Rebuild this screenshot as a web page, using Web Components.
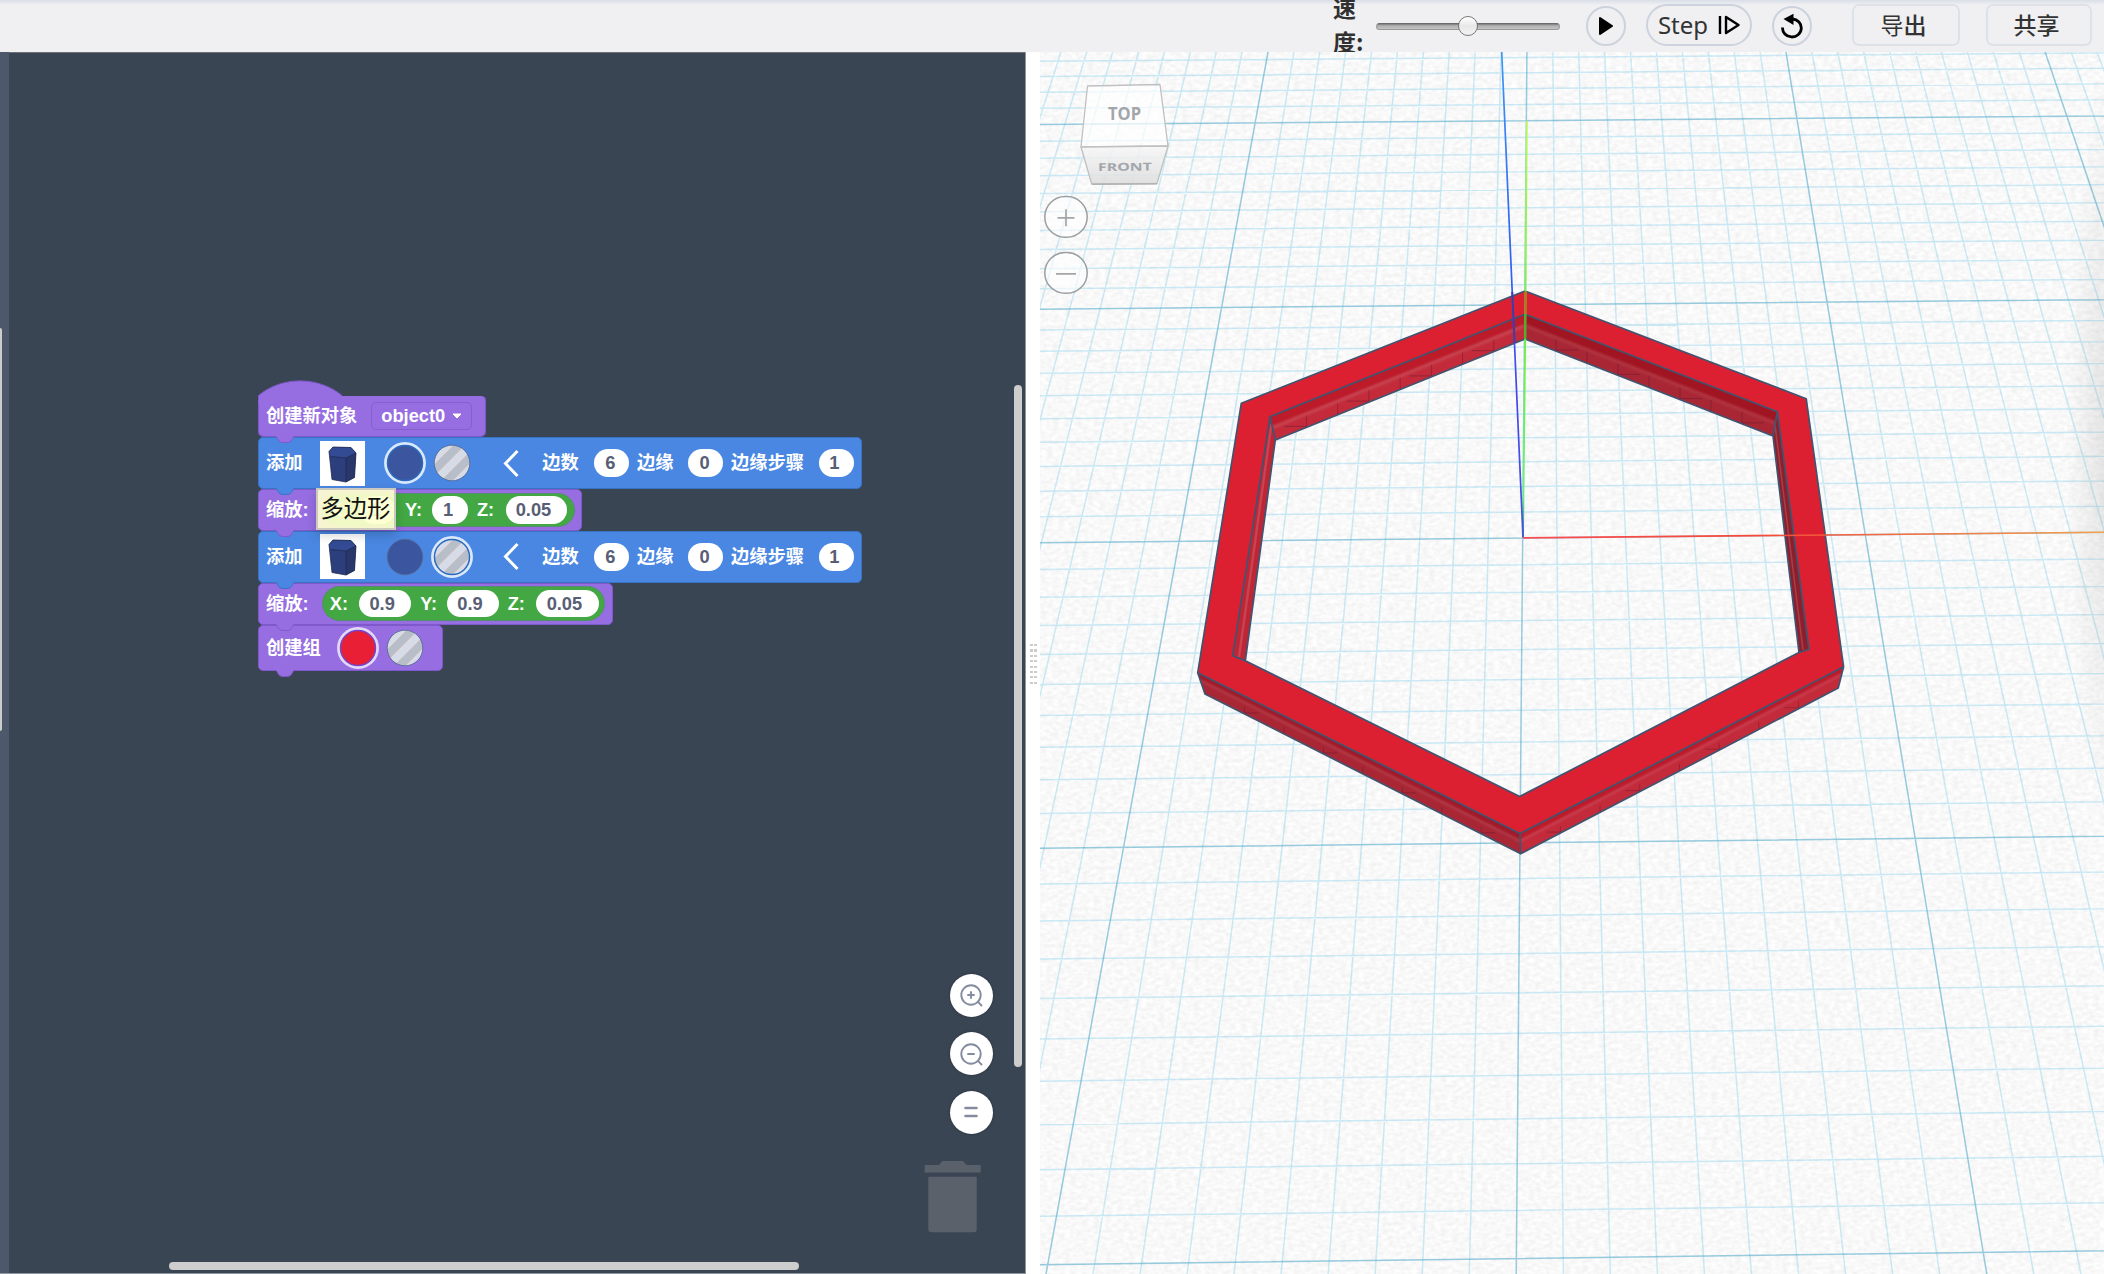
<!DOCTYPE html>
<html lang="zh-CN">
<head>
<meta charset="utf-8">
<title>Codeblocks</title>
<style>
html,body{margin:0;height:100%;overflow:hidden}
body{font-family:"Liberation Sans","Noto Sans CJK SC",sans-serif}
</style>
</head>
<body>
<code-app></code-app>
<script>
function define(name, html, after) {
  const template = document.createElement('template');
  template.innerHTML = html;
  customElements.define(name, class extends HTMLElement {
    connectedCallback() {
      if (this.shadowRoot) return;
      this.attachShadow({ mode: 'open' }).append(template.content.cloneNode(true));
      if (after) after(this, this.shadowRoot);
    }
  });
}

/* ---------- toolbar ---------- */
define('tool-button', `<style>
:host{display:flex;align-items:center;justify-content:center;box-sizing:border-box;width:40px;height:40px;border:2px solid #ccd3dc;border-radius:21px;background:#f0f0f2;color:#333;font-size:24px;flex:none}
:host([kind=step]){width:106px;height:42px;gap:10px;padding-bottom:1px}
:host([kind=text]){width:108px;height:42px;border-color:#dde2e8;border-radius:7px;font-size:23px;padding:0 5px 2px 0}
</style><slot></slot>`);

define('speed-slider', `<style>
:host{display:flex;align-items:center;justify-content:center;width:184px;height:20px;position:relative}
.track{flex:1;height:7px;box-sizing:border-box;border-radius:3.5px;background:linear-gradient(#777,#b0b0b0 35%,#c4c4c4);border:1px solid #999;border-top-color:#6c6c6c}
.thumb{position:absolute;left:82px;top:0;width:20px;height:20px;box-sizing:border-box;border:1.3px solid #777;border-radius:50%;background:linear-gradient(#fff,#e8e8e8 50%,#f3f3f3)}
</style><div class="track"></div><div class="thumb"></div>`);

define('app-toolbar', `<style>
:host{display:block;height:52px;background:linear-gradient(#d9dee7,#f0f0f3 5px);overflow:hidden;font-family:"Noto Sans","Noto Sans CJK SC",sans-serif}
.row{display:flex;align-items:center;height:52px;padding-left:1333px}
.label{width:31px;font:bold 23px/34px "Noto Sans CJK SC",sans-serif;color:#303030;margin-right:12px;height:68px;margin-top:-4px}
.label span{display:block}
</style><div class="row">
<div class="label"><span>速</span><span>度:</span></div>
<speed-slider></speed-slider>
<tool-button style="margin-left:26px"><svg width="16" height="18" viewBox="0 0 16 18"><path d="M2 1 L14 9 L2 17Z" stroke="#000" stroke-width="2" stroke-linejoin="round"/></svg></tool-button>
<tool-button kind="step" style="margin:-2px 20px 0"><span>Step</span><svg width="22" height="20" viewBox="0 0 22 20"><path d="M2 1V19M8 2L20.5 10 8 18Z" fill="none" stroke="#000" stroke-width="2.4" stroke-linejoin="round"/></svg></tool-button>
<tool-button><svg width="22" height="26" viewBox="0 0 22 26"><path d="M1.5 14.5A9.4 9 0 1 0 11.5 6" fill="none" stroke="#000" stroke-width="2.8"/><path d="M2.5 6 L12.5 .8V12Z"/></svg></tool-button>
<tool-button kind="text" style="margin:-2px 26px 0 40px"><span>导<b style="font-weight:500">出</b></span></tool-button>
<tool-button kind="text" style="margin-top:-2px;width:106px;font-weight:500"><span>共享</span></tool-button>
</div>`);

/* ---------- blocks ---------- */
define('code-block', `<style>
:host{display:flex;align-items:center;position:relative;box-sizing:border-box;background:var(--c);border:1px solid var(--e);border-radius:5px;color:#fff;font:bold 18.3px/24px "Liberation Sans","Noto Sans CJK SC",sans-serif;white-space:nowrap;padding-left:7px}
:host([kind=shape]){--c:#4a87e2;--e:#3973c4}
:host([kind=op]){--c:#966ee1;--e:#7f59cb}
:host([hat]){border-top-color:transparent;background-clip:padding-box}
.tab{position:absolute;left:14.5px;bottom:-8px}
.hat{display:none;position:absolute;left:-1px;top:-16px}
:host([hat]) .hat{display:block}
</style>
<svg class="hat" width="90" height="24"><path d="M.5 23V15.5C24 -4 60 -4 84 15.5V23Z" fill="var(--c)"/><path d="M.5 20V15.5C24 -4 60 -4 84 15.5" fill="none" stroke="var(--e)"/></svg>
<slot></slot>
<svg class="tab" width="22" height="9"><path d="M1 0C4 2 3.5 7.5 9 7.5H13C18.5 7.5 18 2 21 0Z" fill="var(--c)"/><path d="M1 1C4 2 3.5 7.5 9 7.5H13C18.5 7.5 18 2 21 1" fill="none" stroke="var(--e)"/></svg>`);

define('block-label', `<style>:host{display:block;flex:none;white-space:nowrap}</style><slot></slot>`);

define('value-pill', `<style>:host{display:flex;flex:none;align-items:center;justify-content:center;box-sizing:border-box;height:27.5px;padding-right:2px;border-radius:14px;background:#fff;color:#575e75}</style><slot></slot>`);

define('drop-field', `<style>:host{display:flex;flex:none;align-items:center;box-sizing:border-box;width:101px;height:28px;border:1px solid #855fce;border-radius:5px;padding-left:9px}svg{margin-left:7px}</style><slot></slot><svg width="10" height="6"><path d="M1 1H9L5 5Z" fill="#fff" stroke="#fff" stroke-linejoin="round"/></svg>`);

define('vector-value', `<style>:host{display:flex;flex:none;align-items:center;box-sizing:border-box;height:34.5px;border-radius:18px;background:#43a843;border:1px solid #568d70;padding-left:7px}</style><slot></slot>`);

define('color-dot', `<style>:host{display:block;flex:none;width:42px;height:42px}svg{display:block}</style>
<svg width="42" height="42"><defs><clipPath id="k"><circle cx="21" cy="21" r="17.5"/></clipPath></defs>
<g class="solid"><circle cx="21" cy="21" r="17.7"/></g>
<g class="stripes" clip-path="url(#k)"><rect width="42" height="42" fill="#b6bfc9"/><path d="M-4 24L24 -4M7 36L36 7" stroke="#d5dce7" stroke-width="9"/><path d="M20 46L46 20" stroke="#d5dce7" stroke-width="9"/><path d="M-1 27L27 -1M4 33L33 4M10 39L39 10M17 43L43 17" stroke="#d8aca8" stroke-width=".7"/></g>
<circle class="edge" cx="21" cy="21" r="17.8" fill="none"/><circle class="ring" cx="21" cy="21" r="19.6" fill="none" stroke-width="2.7"/></svg>`, (host, root) => {
  const tone = host.getAttribute('tone');
  root.querySelector(tone === 'stripe' ? '.solid' : '.stripes').remove();
  if (tone !== 'stripe') root.querySelector('.solid circle').setAttribute('fill', tone);
  const picked = host.hasAttribute('picked');
  const edge = root.querySelector('.edge');
  edge.setAttribute('stroke', picked ? (host.getAttribute('gap') || '#2d69bd') : '#54698f');
  edge.setAttribute('stroke-width', picked ? 2 : .8);
  if (picked) root.querySelector('.ring').setAttribute('stroke', host.getAttribute('gap') ? '#e4d8f8' : '#d9e8fb');
  else root.querySelector('.ring').remove();
});

define('shape-thumb', `<style>:host{display:block;flex:none;width:45px;height:45px}svg{display:block}</style>
<svg width="45" height="45"><rect width="45" height="45" fill="#fff"/><path d="M9 10.5L13 6 31 6.5 36 12 34.5 36.5 26 41 12 38.5Z" fill="#2c3e7c"/><path d="M9 10.5L13 6 31 6.5 36 12 26 17 11 15.5Z" fill="#334b93"/><path d="M26 17L36 12 34.5 36.5 26 41Z" fill="#283669"/><path d="M9 10.5L13 6 31 6.5 36 12 34.5 36.5 26 41 12 38.5ZM11 15.5L26 17 36 12M26 17V41" fill="none" stroke="#202c52" stroke-width=".8"/></svg>`);

define('chevron-toggle', `<style>:host{display:block;flex:none;width:18px;height:29px}svg{display:block}</style><svg width="18" height="29"><path d="M15.5 2L3.5 14.5 15.5 27" fill="none" stroke="#fff" stroke-width="3"/></svg>`);

const addRow = (z, solid, stripe) => `<code-block kind="shape" style="width:604px;height:51.8px;z-index:${z}">
<block-label style="width:36px">添加</block-label><shape-thumb style="margin-left:18px"></shape-thumb>
<color-dot tone="#3b559f" ${solid} style="margin-left:19.3px"></color-dot><color-dot tone="stripe" ${stripe} style="margin-left:5px"></color-dot>
<chevron-toggle style="margin-left:28.7px"></chevron-toggle>
<block-label style="width:36.7px;margin-left:22.3px">边数</block-label><value-pill style="width:35.3px;margin-left:14.7px">6</value-pill>
<block-label style="width:36.3px;margin-left:8px">边缘</block-label><value-pill style="width:35.3px;margin-left:14.7px">0</value-pill>
<block-label style="width:73.3px;margin-left:7.7px">边缘步骤</block-label><value-pill style="width:35.3px;padding-right:4px;margin-left:14.4px">1</value-pill>
</code-block>`;

define('block-stack', `<style>
:host{display:flex;flex-direction:column;align-items:flex-start}
.tip{position:absolute;left:58px;top:92.3px;width:80px;height:42px;box-sizing:border-box;border:2px solid #c9c9bf;background:rgba(255,255,208,.92);color:#111;font:23.3px/34px "Noto Sans CJK SC",sans-serif;padding-left:2.5px;white-space:nowrap;z-index:20;box-shadow:0 5px 10px rgba(0,0,0,.18)}
</style>
<code-block kind="op" hat style="width:228px;height:41.8px;z-index:9"><block-label style="width:91.7px">创建新对象</block-label><drop-field style="margin-left:13.6px">object0</drop-field></code-block>
${addRow(8, 'picked', '')}
<code-block kind="op" style="width:324px;height:41.9px;z-index:7"><block-label style="width:44px">缩放:</block-label>
<vector-value style="width:253px;margin-left:11.7px"><block-label style="width:17.3px">X:</block-label><value-pill style="width:34.6px;margin-left:13px">1</value-pill><block-label style="width:15.3px;margin-left:10.5px">Y:</block-label><value-pill style="width:36.6px;padding-right:4px;margin-left:11.3px">1</value-pill><block-label style="width:16.3px;margin-left:8.7px">Z:</block-label><value-pill style="width:61.6px;padding-right:6px;margin-left:12.4px">0.05</value-pill></vector-value></code-block>
${addRow(6, '', 'picked')}
<code-block kind="op" style="width:355px;height:41.9px;z-index:5"><block-label style="width:44px">缩放:</block-label>
<vector-value style="width:283.3px;margin-left:11.7px"><block-label style="width:17.3px">X:</block-label><value-pill style="width:51.7px;padding-right:6px;margin-left:12.3px">0.9</value-pill><block-label style="width:15.3px;margin-left:9.3px">Y:</block-label><value-pill style="width:52px;padding-right:6px;margin-left:11.4px">0.9</value-pill><block-label style="width:16.3px;margin-left:8.7px">Z:</block-label><value-pill style="width:62.4px;padding-right:6px;margin-left:12.3px">0.05</value-pill></vector-value></code-block>
<code-block kind="op" style="width:184.7px;height:46.8px;z-index:4"><block-label style="width:54.7px">创建组</block-label><color-dot tone="#e81f35" picked gap="#7445c9" style="margin-left:16.3px"></color-dot><color-dot tone="stripe" style="margin-left:5px"></color-dot></code-block>
<div class="tip">多边形</div>`);

define('round-control', `<style>:host{display:flex;align-items:center;justify-content:center;width:43px;height:43px;border-radius:50%;background:#fff;box-shadow:0 0 3px rgba(0,0,0,.3)}</style><slot></slot>`);

define('code-workspace', `<style>
:host{display:flex;position:relative;box-sizing:border-box;width:1026px;background:#3a4554;border-bottom:1px solid #9096a0;border-right:1px solid #9096a0;overflow:hidden}
.flyout{width:9px;background:#4d596a;padding-top:276px;box-sizing:border-box}
.flyout i{display:block;width:2px;height:403px;background:#ccc;border-radius:0 2px 2px 0}
.canvas{flex:1;border-top:1px solid #6b7079}
block-stack{position:absolute;left:258px;top:343.4px}
.controls{position:absolute;left:949.8px;top:921.8px;display:flex;flex-direction:column;gap:15.6px}
.trash{position:absolute;left:924px;top:1108px}
.v,.h{position:absolute;background:#cdcdcd;border-radius:5px}
.v{left:1013.5px;top:333px;width:8px;height:682px}
.h{left:169px;top:1209.5px;width:630px;height:8px}
</style>
<div class="flyout"><i></i></div><div class="canvas"></div>
<block-stack></block-stack>
<div class="controls">
<round-control><svg width="24" height="24" fill="none" stroke="#858c9f" stroke-width="1.9" stroke-linecap="round"><circle cx="12" cy="12" r="9.7"/><path d="M19 18.8L22.5 22.5M9 12H15M12 9V15"/></svg></round-control>
<round-control><svg width="24" height="24" fill="none" stroke="#858c9f" stroke-width="1.9" stroke-linecap="round"><circle cx="12" cy="12" r="9.7"/><path d="M19 18.8L22.5 22.5M9 12H15"/></svg></round-control>
<round-control><svg width="24" height="24" fill="none" stroke="#858c9f" stroke-width="2.6" stroke-linecap="round"><path d="M6.5 8H17.5M6.5 16H17.5"/></svg></round-control>
</div>
<svg class="trash" width="60" height="74" fill="#5b616b"><path d="M.7 5H15L18.5 1H39L42.5 5H56.7V12.5H.7ZM4.3 16.7H52.7V69Q52.7 72.3 49.5 72.3H7.5Q4.3 72.3 4.3 69Z"/></svg>
<div class="v"></div><div class="h"></div>`);

define('split-handle', `<style>:host{display:flex;width:14px;background:#fff;align-items:flex-start;justify-content:center;padding-top:592px;box-sizing:border-box}
div{display:grid;grid-template-columns:3px 3px;column-gap:1px;row-gap:3.2px;grid-auto-rows:2.2px}i{background:#ccc}</style><div>${'<i></i>'.repeat(16)}</div>`);

/* ---------- 3D view ---------- */
define('scene-view', `<style>:host{display:block;width:1064px;flex:none;overflow:hidden;background:#fbfbfb}svg{display:block}</style>
<svg width="1064" height="1222" viewBox="1040 52 1064 1222">
<defs>
<filter id="paper" x="0" y="0" width="100%" height="100%" color-interpolation-filters="sRGB"><feTurbulence type="fractalNoise" baseFrequency=".17 .27" numOctaves="2" seed="4"/><feColorMatrix values=".09 0 0 0 .93 .09 0 0 0 .93 .09 0 0 0 .93 0 0 0 0 1"/></filter>
<filter id="soft" x="-5%" y="-5%" width="110%" height="110%"><feGaussianBlur stdDeviation="1"/></filter>
<radialGradient id="vig"><stop offset="0" stop-color="#808080" stop-opacity=".2"/><stop offset="1" stop-color="#808080" stop-opacity="0"/></radialGradient>
<linearGradient id="bl" gradientUnits="userSpaceOnUse" x1="0" y1="52" x2="0" y2="538"><stop offset="0" stop-color="#3f97f5"/><stop offset=".4" stop-color="#3264f2"/><stop offset=".7" stop-color="#4248ee"/><stop offset="1" stop-color="#4a50e0"/></linearGradient>
<linearGradient id="gr" gradientUnits="userSpaceOnUse" x1="0" y1="121" x2="0" y2="538"><stop offset="0" stop-color="#b8f85c"/><stop offset=".5" stop-color="#70f03a"/><stop offset=".9" stop-color="#62f27b"/><stop offset="1" stop-color="#2878a0"/></linearGradient>
<linearGradient id="rd" gradientUnits="userSpaceOnUse" x1="1523" y1="0" x2="2104" y2="0"><stop offset="0" stop-color="#fa4c55"/><stop offset=".4" stop-color="#f64a38"/><stop offset="1" stop-color="#f5a14c"/></linearGradient>
<linearGradient id="cf" x1="0" y1="0" x2="0" y2="1"><stop offset="0" stop-color="#f7f7f7"/><stop offset="1" stop-color="#dcdcdc"/></linearGradient>
</defs>
<rect x="1040" y="52" width="1064" height="1222" filter="url(#paper)"/>
<path class="minor" fill="none" stroke="#74cbe8" stroke-opacity=".36" stroke-width="1.5"/>
<path class="major" fill="none" stroke="#58adca" stroke-opacity=".62" stroke-width="1.5"/>
<ellipse cx="2110" cy="445" rx="44" ry="380" fill="url(#vig)"/>
<g stroke-linejoin="round">
<path d="M1197.7 672.8L1520 833.5 1520.7 853.8 1205 694Z" fill="#a92735"/>
<path d="M1198.5 674L1520 834V840L1201 680Z" fill="#a11a29"/><path d="M1201 680.5L1520 841" stroke="#b23b47" stroke-width="2.4" filter="url(#soft)"/>
<path d="M1843.6 666.8L1520 833.5 1520.7 853.8 1838.2 688Z" fill="#c32b3b"/>
<path d="M1842 668L1520 834V840L1842 674Z" fill="#bd1a2a"/><path d="M1841 674.5L1520 841" stroke="#c84251" stroke-width="2.4" filter="url(#soft)"/>
<path d="M1270 416.7L1525 314.3V339L1275.3 440Z" fill="#c32b3b"/>
<path d="M1270 416.7L1525 314.3V325L1272 427Z" fill="#bd1a2a"/><path d="M1272.5 427.5L1525 325.5" stroke="#c64450" stroke-width="3.4" filter="url(#soft)"/>
<path d="M1777.4 411.7L1525 314.3V339L1773 436Z" fill="#a92735"/>
<path d="M1777.4 411.7L1525 314.3V325L1776 423Z" fill="#a11523"/><path d="M1775.5 423L1525 325.5" stroke="#b03640" stroke-width="3.4" filter="url(#soft)"/>
<path d="M1270 416.7L1275.3 440 1245.3 660.8 1232.7 655.7Z" fill="#bf2635"/><path d="M1271.5 424L1239 657" stroke="#c84453" stroke-width="2.4"/>
<path d="M1777.4 411.7L1773 436 1799 652.5 1809 649.3Z" fill="#8d1e2c"/><path d="M1775 425L1803 650" stroke="#a63d48" stroke-width="1.6"/>
<path class="ticks" fill="none" stroke="#4b1830" stroke-opacity=".38" stroke-width="1"/>
<path d="M1525 291L1806.2 398.7 1843.6 666.8 1520 833.5 1197.7 672.8 1241.3 403.3ZM1525 314.3L1270 416.7 1232.7 655.7 1245.3 660.8 1519.7 796.5 1799 652.5 1809 649.3 1777.4 411.7Z" fill="#dd2031" fill-rule="evenodd"/>
<path d="M1525 291L1806.2 398.7 1843.6 666.8 1838.2 688 1520.7 853.8 1205 694 1197.7 672.8 1241.3 403.3ZM1245.3 660.8L1519.7 796.5 1799 652.5 1773 436 1525 339 1275.3 440ZM1197.7 672.8L1520 833.5 1843.6 666.8M1520 833.5L1520.7 853.8M1245.3 660.8L1232.7 655.7 1270 416.7 1525 314.3 1777.4 411.7 1809 649.3 1799 652.5M1270 416.7L1275.3 440M1777.4 411.7L1773 436M1525 314.3V339" fill="none" stroke="#405470" stroke-width="1.7"/>
</g>
<path d="M1526.8 121L1525.2 339 1523 537" stroke="url(#gr)" stroke-width="1.8" fill="none"/>
<path d="M1525.5 291V314" stroke="#a87c20" stroke-width="2"/>
<path d="M1525.3 314V339" stroke="#4fae28" stroke-width="2"/>
<path d="M1501.7 52L1523 537.7" stroke="url(#bl)" stroke-width="1.7"/>
<path d="M1512.2 292L1514.6 343" stroke="#443aa5" stroke-width="2"/>
<path d="M1523 537.9L2104 532.3" stroke="url(#rd)" stroke-width="1.6"/>
<g stroke="#c0c0c0" stroke-width="1.3" stroke-linejoin="round"><path d="M1087.5 86L1160 84.5 1168 146 1081 147Z" fill="#fff" fill-opacity=".7"/><path d="M1081 147L1168 146 1157 183.5 1091.7 184Z" fill="url(#cf)" fill-opacity=".85"/></g>
<path d="M1092 184.3L1157 183.7" stroke="#b2b2b2" stroke-width="1.6"/>
<g font-family="'Open Sans', sans-serif" font-weight="700" fill="#a2a6ab"><text x="1108" y="120" font-size="17" textLength="33" lengthAdjust="spacingAndGlyphs">TOP</text><text transform="translate(1098 171) rotate(-.6)" font-size="10.8" textLength="54" lengthAdjust="spacingAndGlyphs">FRONT</text></g>
<g fill="#fff" fill-opacity=".6" stroke="#9b9ea2" stroke-width="1.5"><rect x="1044.8" y="196.5" width="42.4" height="40.8" rx="20.4"/><rect x="1044.8" y="252.5" width="42.4" height="40.8" rx="20.4"/></g>
<path d="M1057.5 217.8H1074.5M1066 209.3V226.3M1056 273.8H1076" stroke="#a5a5a7" stroke-width="1.7"/>
</svg>`, (host, root) => {
  // Projective map of the workplane: u in -1..1 and v in -2..2 onto the four outer major crossings.
  const [[x0, y0], [x1, y1], [x2, y2], [x3, y3]] = [[1255.1, 122.9], [1796.9, 118.5], [1983.2, 1252.4], [1047.7, 1264.6]];
  const dx1 = x1 - x2, dx2 = x3 - x2, sx = x0 - x1 + x2 - x3;
  const dy1 = y1 - y2, dy2 = y3 - y2, sy = y0 - y1 + y2 - y3;
  const det = dx1 * dy2 - dx2 * dy1;
  const g = (sx * dy2 - dx2 * sy) / det, h = (dx1 * sy - sx * dy1) / det;
  const project = (u, v) => {
    const s = (u + 1) / 2, t = (v + 2) / 4, w = g * s + h * t + 1;
    return (((x1 - x0 + g * x1) * s + (x3 - x0 + h * x3) * t + x0) / w).toFixed(1) + ' ' +
      (((y1 - y0 + g * y1) * s + (y3 - y0 + h * y3) * t + y0) / w).toFixed(1);
  };
  let minor = '', major = '';
  for (let i = -40; i <= 40; i++) {
    const d = `M${project(i / 10, -3.5)}L${project(i / 10, 2.3)}`;
    if (i % 10) minor += d; else major += d;
  }
  for (let j = -35; j <= 22; j++) {
    const d = `M${project(-4, j / 10)}L${project(4, j / 10)}`;
    if (j % 10) minor += d; else major += d;
  }
  root.querySelector('.minor').setAttribute('d', minor);
  root.querySelector('.major').setAttribute('d', major);
  // Workplane lines that show through the translucent side walls.
  let ticks = '';
  const walls = [[1275.3, 440, 1525, 339, 12, -22], [1525, 339, 1773, 436, 12, 22], [1205, 694, 1520.7, 853.8, 7, 14], [1520.7, 853.8, 1838.2, 688, 7, -14]];
  for (const [ax, ay, bx, by, len, run] of walls)
    for (let k = 1; k < 8; k++) {
      const x = ax + (bx - ax) * k / 8, y = ay + (by - ay) * k / 8;
      ticks += `M${x} ${y}v${-len}`;
      if (k % 2) ticks += `M${x} ${y - 1}h${run}`;
    }
  root.querySelector('.ticks').setAttribute('d', ticks);
});

define('code-app', `<style>:host{display:flex;flex-direction:column;width:2104px;height:1274px}main{display:flex;flex:1;min-height:0}</style>
<app-toolbar></app-toolbar><main><code-workspace></code-workspace><split-handle></split-handle><scene-view></scene-view></main>`);
</script>
</body>
</html>
